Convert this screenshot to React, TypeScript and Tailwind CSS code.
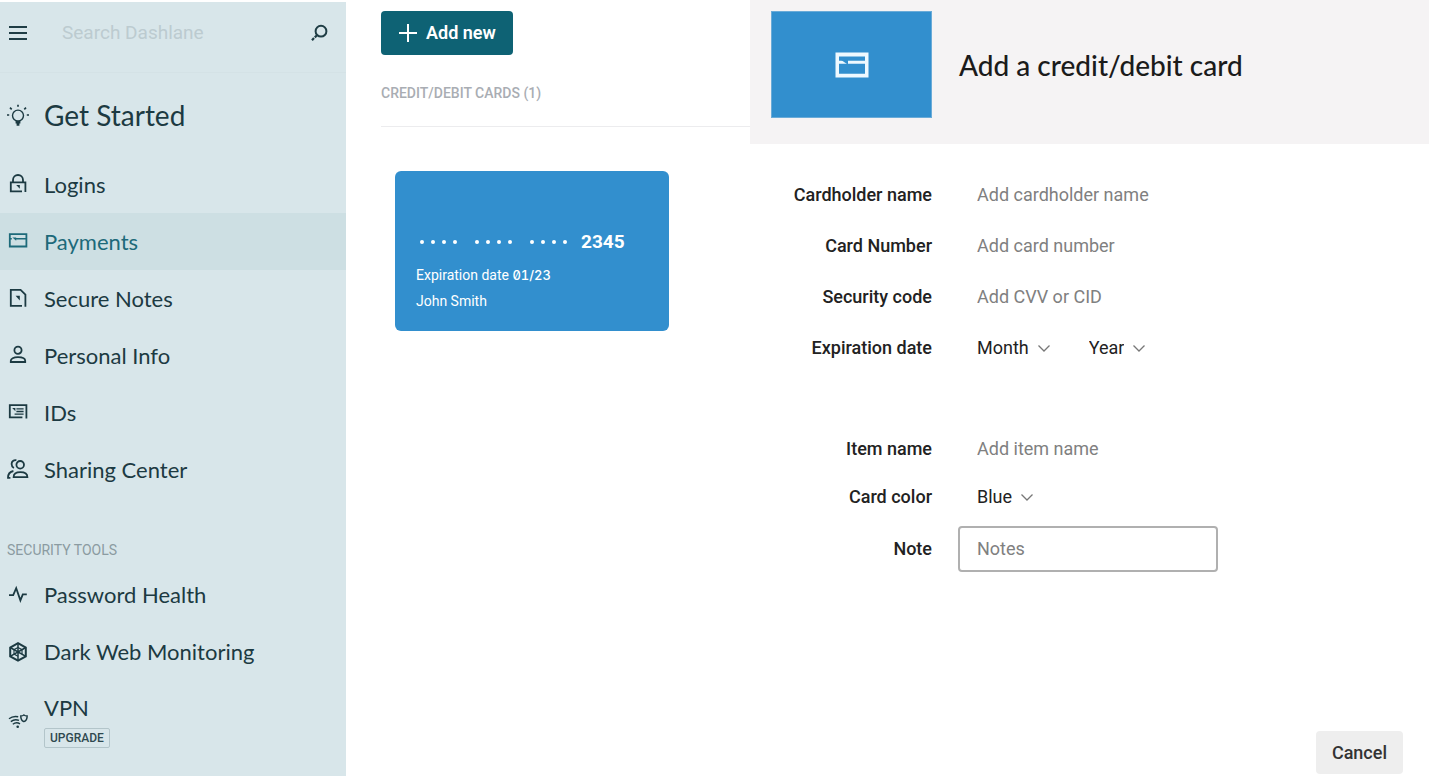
import type { ReactNode } from "react";

const UI_FONT = "font-['Roboto','Liberation_Sans',sans-serif]";
const BRAND_FONT = "font-['Lato','Open_Sans',sans-serif]";

function Icon({ children, className = "w-[22px] h-[22px]" }: { children: ReactNode; className?: string }) {
  return (
    <svg
      viewBox="0 0 22 22"
      className={`shrink-0 ${className}`}
      fill="none"
      stroke="currentColor"
      strokeWidth="1.8"
      aria-hidden="true"
    >
      {children}
    </svg>
  );
}

const icons = {
  bulb: (
    <Icon>
      <circle cx="11" cy="11.6" r="5.5" strokeWidth="1.4" />
      <path d="M8.6 16.600h4.800v3h-1v2.200H9.600v-2.200h-1z" fill="currentColor" stroke="none" />
      <path d="M11 .800v2M3 3.600l1.700 1.700M19 3.600l-1.700 1.700M0 11h2.200M19.800 11H22" strokeWidth="1.700" />
    </Icon>
  ),
  lock: (
    <Icon>
      <path d="M6 8V6a5 5 0 0 1 10 0v2" />
      <path d="M15 17.3H3.8V8.3h14.600v9.800" />
      <path d="M9.2 11h3.600v3.800z" fill="currentColor" stroke="none" />
    </Icon>
  ),
  card: (
    <Icon>
      <path d="M2.8 3.1h16.600v12.400H2.800z" />
      <path d="M2.8 7.800h2M9 7.800h10.400" strokeWidth="1.600" />
      <path d="M5.400 6.600h3.800v3.200z" fill="currentColor" stroke="none" />
    </Icon>
  ),
  note: (
    <Icon>
      <path d="M15 17.8H3.8V1.9h9.8l4.800 4.800v12" />
      <path d="M8.6 7.8h4.200v4.800z" fill="currentColor" stroke="none" />
    </Icon>
  ),
  person: (
    <Icon>
      <circle cx="11" cy="5.200" r="3.600" />
      <path d="M3.8 17v-1.200c0-2 2.600-3.600 7.200-3.600s7.200 1.600 7.200 3.600V17z" />
    </Icon>
  ),
  id: (
    <Icon>
      <path d="M15.4 15.4H2.8V3.2h16.600v13.200" />
      <path d="M9.4 6.900h7.200M9.4 9.500h7.200M7.600 12.100h9" strokeWidth="1.400" />
      <path d="M5.2 6h3.200v3.200z" fill="currentColor" stroke="none" />
    </Icon>
  ),
  people: (
    <Icon>
      <circle cx="13.2" cy="5.8" r="3.8" />
      <path d="M6.6 18.2c0-3.400 2.800-5 6.800-5s7 1.600 7 5z" />
      <path d="M9.400 1.200C6.600.800 4.600 2.600 4.600 5c0 1.800.9 3.200 2.300 4M6.400 12C3.200 12.600 1 14.800 1 18.800h2.400" />
    </Icon>
  ),
  pulse: (
    <Icon>
      <path d="M2 11.200h4.200L9.200 4.200l4.200 12.200 2.400-6h4" />
    </Icon>
  ),
  web: (
    <Icon>
      <path d="M11 2.200l7.800 4.300v8.800L11 19.600l-7.800-4.300V6.500z" strokeWidth="2" />
      <path d="M11 2.200v17.400M3.200 6.500l15.600 8.800M18.800 6.500L3.200 15.300" strokeWidth="1.500" />
      <path d="M11 6.600L7 8.700v4.400l4 2.200M11 6.600l4 2.100v4.400" strokeWidth="1.100" />
    </Icon>
  ),
  vpn: (
    <Icon>
      <path
        d="M2 9.800c2.700-2.200 6-2.800 9.200-2M3.800 12.600c2.400-1.900 5.400-2.400 8.200-1.200M5.800 15.200c2-1.500 5-1.800 7.200-.4"
        strokeWidth="1.400"
      />
      <path
        d="M13.800 7c1.200 0 2.200-.300 3.100-1 .9.700 1.900 1 3.200 1 .1 2.900-.9 4.800-3.200 5.600-2.200-.8-3.200-2.700-3.100-5.600z"
        strokeWidth="1.500"
      />
      <circle cx="10.700" cy="17.800" r="1.300" fill="currentColor" stroke="none" />
    </Icon>
  ),
};

const mainNav = [
  { label: "Logins", icon: icons.lock },
  { label: "Payments", icon: icons.card, active: true },
  { label: "Secure Notes", icon: icons.note },
  { label: "Personal Info", icon: icons.person },
  { label: "IDs", icon: icons.id },
  { label: "Sharing Center", icon: icons.people },
];

const securityNav = [
  { label: "Password Health", icon: icons.pulse },
  { label: "Dark Web Monitoring", icon: icons.web },
];

function NavItem({ label, icon, active }: { label: string; icon: ReactNode; active?: boolean }) {
  return (
    <a
      href="#"
      aria-current={active ? "page" : undefined}
      className={`flex h-[57px] items-center gap-[15px] pl-[7px] text-[22px] ${
        active ? "bg-[#cddfe3] text-[#1d6a7a]" : "text-[#1c3a42]"
      }`}
    >
      {icon}
      <span>{label}</span>
    </a>
  );
}

function Sidebar() {
  return (
    <aside className={`my-0.5 w-[346px] shrink-0 bg-[#d8e6ea] ${BRAND_FONT}`}>
      <div className="flex h-[71px] items-center border-b border-[#d4e2e6] pb-2 pl-2 pr-[18px]">
        <button type="button" aria-label="Menu" className="text-[#1f3d45]">
          <svg viewBox="0 0 20 16" className="h-4 w-5" stroke="currentColor" strokeWidth="1.8" aria-hidden="true">
            <path d="M1 2h18M1 8h18M1 14h18" />
          </svg>
        </button>
        <input
          type="search"
          aria-label="Search Dashlane"
          placeholder="Search Dashlane"
          className={`ml-[34px] min-w-0 flex-1 bg-transparent text-[19px] outline-none placeholder:text-[#bccbd0] ${UI_FONT}`}
        />
        <button type="button" aria-label="Search" className="text-[#1f3d45]">
          <svg viewBox="0 0 18 18" className="size-[18px]" fill="none" stroke="currentColor" aria-hidden="true">
            <circle cx="11" cy="7.2" r="5.4" strokeWidth="2" />
            <path d="M7 11.200l-2.200 2.200M4 14l-2 2.200" strokeWidth="2.200" />
          </svg>
        </button>
      </div>

      <nav>
        <a href="#" className="flex h-[83px] items-center gap-[15px] pl-[7px] text-[28px] text-[#1c3a42]">
          {icons.bulb}
          <span>Get Started</span>
        </a>
        {mainNav.map((item) => (
          <NavItem key={item.label} {...item} />
        ))}

        <h2 className={`mt-[42px] h-[26px] pl-[7px] text-sm leading-5 text-[#8b9ba1] ${UI_FONT}`}>SECURITY TOOLS</h2>
        {securityNav.map((item) => (
          <NavItem key={item.label} {...item} />
        ))}
        <a href="#" className="flex items-center gap-[15px] py-3 pl-[7px] text-[22px] text-[#1c3a42]">
          {icons.vpn}
          <span className="flex flex-col items-start gap-1">
            <span className="leading-8">VPN</span>
            <span
              className={`rounded-xs border border-[#b3c5ca] px-[5px] text-[12px] leading-[18px] font-medium text-[#2f4950] ${UI_FONT}`}
            >
              UPGRADE
            </span>
          </span>
        </a>
      </nav>
    </aside>
  );
}

function DotGroup() {
  return (
    <span className="flex gap-[7px]">
      {[0, 1, 2, 3].map((i) => (
        <span key={i} className="size-1 rounded-full bg-white" />
      ))}
    </span>
  );
}

function Payments() {
  return (
    <main className="w-[404px] shrink-0 pt-[11px] pl-[35px]">
      <button
        type="button"
        className="flex h-11 items-center gap-2 rounded bg-[#0e6274] px-[17px] text-lg font-semibold text-white"
      >
        <svg viewBox="0 0 20 20" className="size-5" stroke="currentColor" strokeWidth="2" aria-hidden="true">
          <path d="M10 1v18M1 10h18" />
        </svg>
        Add new
      </button>
      <h2 className="mt-7 border-b border-[#ececee] pb-[23px] text-sm leading-5 font-medium text-[#a9adb3]">
        CREDIT/DEBIT CARDS (1)
      </h2>

      <article className="mt-11 ml-3.5 h-40 w-[274px] rounded-md bg-[#328fce] px-[21px] pt-[59px] text-sm text-white">
        <div className="flex items-center gap-[18px] pl-1">
          <DotGroup />
          <DotGroup />
          <div className="flex items-center gap-3.5">
            <DotGroup />
            <span className="text-[19px] leading-6 font-bold">2345</span>
          </div>
        </div>
        <p className="mt-[11px] leading-5">
          Expiration date{" "}
          <span className="font-['Inter',sans-serif] text-[13px] font-medium slashed-zero tabular-nums">01/23</span>
        </p>
        <p className="mt-1.5 leading-5">John Smith</p>
      </article>
    </main>
  );
}

function Field({ id, label, placeholder }: { id: string; label: string; placeholder: string }) {
  return (
    <>
      <label htmlFor={id} className="text-right font-medium">
        {label}
      </label>
      <input
        id={id}
        type="text"
        placeholder={placeholder}
        className="w-[260px] max-w-full bg-transparent pl-[19px] outline-none placeholder:text-[#808080]"
      />
    </>
  );
}

function Dropdown({ id, label, options }: { id: string; label?: string; options: string[] }) {
  return (
    <span className="relative inline-flex items-center">
      <select
        id={id}
        aria-label={label}
        className="field-sizing-content appearance-none bg-transparent pr-[22px] outline-none"
      >
        {options.map((o) => (
          <option key={o}>{o}</option>
        ))}
      </select>
      <svg
        viewBox="0 0 14 10"
        className="pointer-events-none absolute right-0 h-2.5 w-3.5"
        fill="none"
        stroke="#777"
        strokeWidth="1.3"
        aria-hidden="true"
      >
        <path d="M1.5 2.500L7 8l5.500-5.500" />
      </svg>
    </span>
  );
}

const ROW = "grid grid-cols-[182px_1fr] items-center gap-[26px]";

function AddCardPanel() {
  return (
    <section className="flex min-w-0 flex-1 flex-col bg-white">
      <header className="flex items-center gap-[27px] bg-[#f5f3f4] pt-[11px] pb-[26px] pl-[21px]">
        <div className="flex h-[107px] w-[161px] items-center justify-center border border-[#6aabd8] bg-[#328fce]">
          <svg viewBox="0 0 34 26" className="h-[26px] w-[34px]" aria-hidden="true">
            <path d="M.5.500h33v25H.500zM4 4.500v4.200h26V4.500zM4 11.800v10h26v-10z" fill="#eef9ff" fillRule="evenodd" />
            <path d="M5.500 7.500h7.500v5.300z" fill="#328fce" />
          </svg>
        </div>
        <h1 className={`text-[28px] leading-9 font-medium text-[#1b1b1b] ${BRAND_FONT}`}>Add a credit/debit card</h1>
      </header>

      <form className="flex flex-1 flex-col text-lg text-[#222]">
        <div className="mt-[25px]">
          <div className={`h-[51px] ${ROW}`}>
            <Field id="holder" label="Cardholder name" placeholder="Add cardholder name" />
          </div>
          <div className={`h-[51px] ${ROW}`}>
            <Field id="number" label="Card Number" placeholder="Add card number" />
          </div>
          <div className={`h-[51px] ${ROW}`}>
            <Field id="cvv" label="Security code" placeholder="Add CVV or CID" />
          </div>
          <div className={`h-[51px] ${ROW}`}>
            <label htmlFor="month" className="text-right font-medium">
              Expiration date
            </label>
            <div className="flex gap-[38px] pl-[19px]">
              <Dropdown id="month" options={["Month", "01", "02", "03", "04", "05", "06"]} />
              <Dropdown id="year" label="Expiration year" options={["Year", "2023", "2024", "2025"]} />
            </div>
          </div>
        </div>

        <div className="mt-[52px]">
          <div className={`h-12 ${ROW}`}>
            <Field id="item" label="Item name" placeholder="Add item name" />
          </div>
          <div className={`h-12 ${ROW}`}>
            <label htmlFor="color" className="text-right font-medium">
              Card color
            </label>
            <div className="pl-[19px]">
              <Dropdown id="color" options={["Blue", "Green", "Gold"]} />
            </div>
          </div>
          <div className={`h-14 ${ROW}`}>
            <label htmlFor="note" className="text-right font-medium">
              Note
            </label>
            <textarea
              id="note"
              rows={1}
              placeholder="Notes"
              className="h-[46px] w-[260px] max-w-full resize-none overflow-hidden rounded border-2 border-[#b0b0b0] px-[17px] py-2 leading-[26px] outline-none placeholder:text-[#808080]"
            />
          </div>
        </div>

        <div className="mt-auto flex justify-end pr-[26px] pb-1">
          <button type="button" className="h-[43px] rounded bg-[#eeeeee] px-4 font-medium text-[#333]">
            Cancel
          </button>
        </div>
      </form>
    </section>
  );
}

export default function App() {
  return (
    <div className={`flex min-h-screen bg-white ${UI_FONT}`}>
      <Sidebar />
      <Payments />
      <AddCardPanel />
    </div>
  );
}
